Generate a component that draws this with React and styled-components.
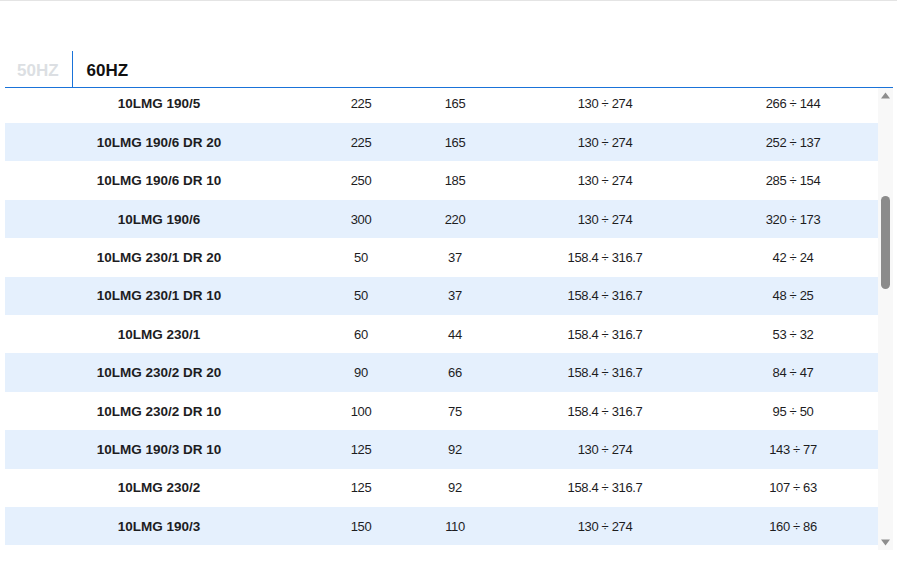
import { useLayoutEffect, useRef, useState } from "react";
import styled, { createGlobalStyle } from "styled-components";

const GlobalStyle = createGlobalStyle`
  html, body {
    margin: 0;
    padding: 0;
    background: #fff;
  }
  body {
    font-family: "Liberation Sans", Arial, sans-serif;
    color: #1d1d1f;
  }
`;

const ROW_H = 38.4;
const VIEW_H = 462;
const BTN = 15;

const Page = styled.div`
  border-top: 1px solid #e4e4e4;
  padding: 50px 4px 0 5px;
  width: 888px;
`;

const TabBar = styled.div`
  display: flex;
  height: 36px;
  border-bottom: 1px solid #1a73d9;
`;

const Tab = styled.button`
  all: unset;
  display: flex;
  align-items: center;
  padding: 3px 13px 0 ${(p) => (p.$first ? "12px" : "14px")};
  font-family: "Liberation Sans", Arial, sans-serif;
  font-weight: 700;
  font-size: 17px;
  color: ${(p) => (p.$active ? "#111" : "#dcdfe3")};
  border-right: ${(p) => (p.$first ? "1px solid #1a73d9" : "none")};
  cursor: pointer;
`;

const Frame = styled.div`
  display: flex;
  height: ${VIEW_H}px;
`;

const Scroller = styled.div`
  flex: 1;
  overflow-y: scroll;
  scrollbar-width: none;
  &::-webkit-scrollbar {
    display: none;
  }
`;

const Track = styled.div`
  width: 15px;
  display: flex;
  flex-direction: column;
  background: #f8f8f8;
`;

const ArrowButton = styled.div`
  height: ${BTN}px;
  display: flex;
  align-items: center;
  justify-content: center;
  svg {
    display: block;
  }
`;

const Rail = styled.div`
  flex: 1;
  display: flex;
  flex-direction: column;
  padding: 0 3px;
`;

const Thumb = styled.div`
  border-radius: 5px;
  background: #8b8b8b;
`;

const Row = styled.div`
  display: grid;
  grid-template-columns: 300px 112px 76px 224px 1fr;
  height: ${ROW_H}px;
  align-items: center;
  background: ${(p) => (p.$striped ? "#e5f0fd" : "#fff")};
`;

const Cell = styled.div`
  text-align: center;
  font-size: ${(p) => (p.$name ? "13.5px" : "13px")};
  font-weight: ${(p) => (p.$name ? 700 : 400)};
  letter-spacing: ${(p) => (p.$name ? "0" : "-0.35px")};
  padding-left: ${(p) => (p.$name ? "8px" : "0")};
  padding-right: ${(p) => (p.$last ? "9px" : "0")};
  color: #1d1d1f;
  white-space: nowrap;
`;

const visible = [
  ["10LMG 190/5", "225", "165", "130 ÷ 274", "266 ÷ 144"],
  ["10LMG 190/6 DR 20", "225", "165", "130 ÷ 274", "252 ÷ 137"],
  ["10LMG 190/6 DR 10", "250", "185", "130 ÷ 274", "285 ÷ 154"],
  ["10LMG 190/6", "300", "220", "130 ÷ 274", "320 ÷ 173"],
  ["10LMG 230/1 DR 20", "50", "37", "158.4 ÷ 316.7", "42 ÷ 24"],
  ["10LMG 230/1 DR 10", "50", "37", "158.4 ÷ 316.7", "48 ÷ 25"],
  ["10LMG 230/1", "60", "44", "158.4 ÷ 316.7", "53 ÷ 32"],
  ["10LMG 230/2 DR 20", "90", "66", "158.4 ÷ 316.7", "84 ÷ 47"],
  ["10LMG 230/2 DR 10", "100", "75", "158.4 ÷ 316.7", "95 ÷ 50"],
  ["10LMG 190/3 DR 10", "125", "92", "130 ÷ 274", "143 ÷ 77"],
  ["10LMG 230/2", "125", "92", "158.4 ÷ 316.7", "107 ÷ 63"],
  ["10LMG 190/3", "150", "110", "130 ÷ 274", "160 ÷ 86"],
];

const before = [
  ["10LMG 150/1", "20", "15", "95 ÷ 190", "18 ÷ 10"],
  ["10LMG 150/2 DR 20", "30", "22", "95 ÷ 190", "27 ÷ 15"],
  ["10LMG 150/2", "40", "30", "95 ÷ 190", "36 ÷ 20"],
  ["10LMG 150/3", "50", "37", "95 ÷ 190", "45 ÷ 25"],
  ["10LMG 190/1 DR 20", "40", "30", "130 ÷ 274", "38 ÷ 21"],
  ["10LMG 190/1", "50", "37", "130 ÷ 274", "48 ÷ 26"],
  ["10LMG 190/2 DR 10", "75", "55", "130 ÷ 274", "72 ÷ 39"],
  ["10LMG 190/2", "100", "75", "130 ÷ 274", "96 ÷ 52"],
  ["10LMG 190/4 DR 20", "150", "110", "130 ÷ 274", "160 ÷ 86"],
  ["10LMG 190/4 DR 10", "175", "130", "130 ÷ 274", "180 ÷ 98"],
  ["10LMG 190/4", "200", "150", "130 ÷ 274", "213 ÷ 115"],
  ["10LMG 190/5 DR 20", "200", "150", "130 ÷ 274", "230 ÷ 124"],
];

const after = Array.from({ length: 32 }, (_, i) => {
  const stage = Math.floor(i / 3) + 3;
  const suffix = ["DR 20", "DR 10", ""][i % 3];
  const kw = 150 + i * 25;
  return [
    `10LMG 230/${stage}${suffix ? " " + suffix : ""}`,
    String(Math.round(kw / 0.74)),
    String(kw),
    "158.4 ÷ 316.7",
    `${120 + i * 18} ÷ ${70 + i * 9}`,
  ];
});

const rows = [...before, ...visible, ...after];

function Arrow({ down }) {
  return (
    <svg width="9" height="7" viewBox="0 0 9 7">
      <path d={down ? "M0 0.5 H9 L4.5 6.5 Z" : "M0 6.5 H9 L4.5 0.5 Z"} fill="#8e8e8e" />
    </svg>
  );
}

function PumpTable() {
  const ref = useRef(null);
  const [thumb, setThumb] = useState({ top: 93, height: 92 });

  const measure = () => {
    const el = ref.current;
    if (!el) return;
    const rail = VIEW_H - BTN * 2;
    const height = Math.max(20, (rail * el.clientHeight) / el.scrollHeight);
    const range = el.scrollHeight - el.clientHeight;
    const top = range > 0 ? ((rail - height) * el.scrollTop) / range : 0;
    setThumb({ top, height });
  };

  useLayoutEffect(() => {
    if (ref.current) ref.current.scrollTop = before.length * ROW_H + 3.4;
    measure();
  }, []);

  return (
    <Frame>
      <Scroller ref={ref} onScroll={measure}>
        {rows.map((r, i) => (
          <Row key={i} $striped={i % 2 === 1}>
            <Cell $name>{r[0]}</Cell>
            <Cell>{r[1]}</Cell>
            <Cell>{r[2]}</Cell>
            <Cell>{r[3]}</Cell>
            <Cell $last>{r[4]}</Cell>
          </Row>
        ))}
      </Scroller>
      <Track>
        <ArrowButton>
          <Arrow />
        </ArrowButton>
        <Rail>
          <Thumb style={{ marginTop: thumb.top, height: thumb.height }} />
        </Rail>
        <ArrowButton>
          <Arrow down />
        </ArrowButton>
      </Track>
    </Frame>
  );
}

export default function App() {
  return (
    <>
      <GlobalStyle />
      <Page>
        <TabBar>
          <Tab $first>50HZ</Tab>
          <Tab $active>60HZ</Tab>
        </TabBar>
        <PumpTable />
      </Page>
    </>
  );
}
